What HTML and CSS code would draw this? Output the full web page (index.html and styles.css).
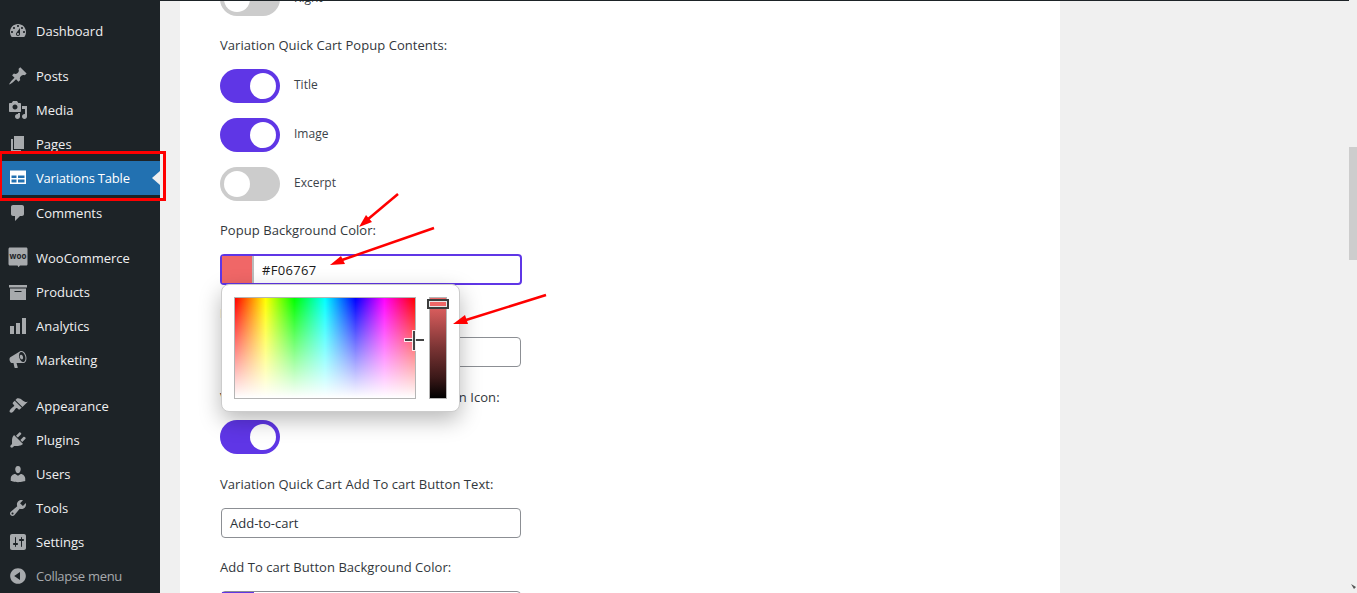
FILE: index.html
```html
<!DOCTYPE html>
<html lang="en">
<head>
<meta charset="utf-8">
<title>Variations Table</title>
<link rel="stylesheet" href="styles.css">
</head>
<body>
<div class="page">
  <nav class="menu">
    <a class="item first"><svg viewBox="0 0 20 20"><path d="M3.76 16h12.48c1.1-1.37 1.76-3.11 1.76-5 0-4.42-3.58-8-8-8s-8 3.58-8 8c0 1.89.66 3.63 1.76 5zM10 4c.55 0 1 .45 1 1s-.45 1-1 1-1-.45-1-1 .45-1 1-1zM6 6c.55 0 1 .45 1 1s-.45 1-1 1-1-.45-1-1 .45-1 1-1zm8 0c.55 0 1 .45 1 1s-.45 1-1 1-1-.45-1-1 .45-1 1-1zm-5.37 5.55L12 7v6c0 1.1-.9 2-2 2s-2-.9-2-2c0-.57.24-1.08.63-1.45zM4 10c.55 0 1 .45 1 1s-.45 1-1 1-1-.45-1-1 .45-1 1-1zm12 0c.55 0 1 .45 1 1s-.45 1-1 1-1-.45-1-1 .45-1 1-1zm-5 3c0-.55-.45-1-1-1s-1 .45-1 1 .45 1 1 1 1-.45 1-1z" fill-rule="evenodd"/></svg><span>Dashboard</span></a>
    <div class="sep"></div>
    <a class="item"><svg viewBox="0 0 20 20"><path d="M10.44 3.02l1.82-1.82 6.36 6.35-1.83 1.82c-1.05-.68-2.48-.57-3.41.36l-.75.75c-.92.93-1.04 2.35-.35 3.41l-1.83 1.82-2.41-2.41-2.8 2.79c-.42.42-3.38 2.71-3.8 2.29s1.86-3.39 2.28-3.81l2.79-2.79L4.1 9.36l1.83-1.82c1.05.69 2.48.57 3.4-.36l.75-.75c.93-.92 1.05-2.35.36-3.41z"/></svg><span>Posts</span></a>
    <a class="item"><svg viewBox="0 0 20 20"><path fill-rule="evenodd" d="M13 11V4c0-.55-.45-1-1-1h-1.67L9 1H5L3.67 3H2c-.55 0-1 .45-1 1v7c0 .55.45 1 1 1h10c.55 0 1-.45 1-1zM7 4.5c1.38 0 2.5 1.12 2.5 2.5S8.38 9.5 7 9.5 4.5 8.38 4.5 7 5.62 4.5 7 4.5zM14 6h5v10.5c0 1.38-1.12 2.5-2.5 2.5S14 17.88 14 16.5s1.12-2.5 2.5-2.5c.17 0 .34.02.5.05V9h-3V6zm-4 8.05V13h2v3.5c0 1.38-1.12 2.5-2.5 2.5S7 17.88 7 16.5 8.12 14 9.5 14c.17 0 .34.02.5.05z"/></svg><span>Media</span></a>
    <a class="item"><svg viewBox="0 0 20 20"><path d="M6 15V2h10v13H6zm-1 1h8v2H3V5h2v11z"/></svg><span>Pages</span></a>
    <a class="item current"><svg viewBox="0 0 20 20"><path fill-rule="evenodd" d="M2 2.500h16V16H2V2.500zm1.500 5v2.500h5V7.500h-5zm6.500 0v2.500h6.500V7.500H10zm-6.500 4v3h5v-3h-5zm6.500 0v3h6.500v-3H10z"/></svg><span>Variations Table</span></a>
    <a class="item comments"><svg viewBox="0 0 20 20"><path d="M5 2h9c1.100 0 2 .9 2 2v7c0 1.100-.9 2-2 2h-2l-5 5v-5H5c-1.100 0-2-.9-2-2V4c0-1.100.9-2 2-2z"/></svg><span>Comments</span></a>
    <div class="sep"></div>
    <a class="item"><svg viewBox="0 0 20 20"><path d="M2 -.5h16c1 0 1.500.6 1.500 1.500v15c0 1-.6 1.500-1.500 1.500h-6l-1.500 1.800-1-1.800H2c-1 0-1.500-.6-1.500-1.500V1c0-.9.6-1.500 1.500-1.500z"/><text class="woo" x="10" y="10.500" text-anchor="middle">woo</text></svg><span>WooCommerce</span></a>
    <a class="item"><svg viewBox="0 0 20 20"><path fill-rule="evenodd" d="M19 3v2.500H1V3h18zM2 6.500h16V18H2V6.500zM13.500 10V9h-7v1h7z"/></svg><span>Products</span></a>
    <a class="item"><svg viewBox="0 0 20 20"><path d="M18 18V2h-4v16h4zm-6 0V7H8v11h4zm-6 0v-8H2v8h4z"/></svg><span>Analytics</span></a>
    <a class="item"><svg viewBox="0 0 20 20"><path fill-rule="evenodd" d="M18.150 5.940c.46 1.620.38 3.220-.02 4.480-.42 1.280-1.260 2.180-2.300 2.480-.16.06-.26.06-.4.06-.06.02-.12.02-.18.02-.06.02-.14.02-.22.02H8.500l1.300 4.500c.02.14-.06.26-.14.34-.08.1-.24.16-.34.16H6.950c-.1 0-.26-.06-.34-.16-.08-.08-.16-.2-.14-.34l-1-4.500H4.250c-.5.060-1.080-.18-1.540-.62s-.88-1.080-1.060-1.880c-.24-.8-.2-1.560-.02-2.200.18-.62.58-1.080 1.060-1.300l9-5.420c.1-.06.18-.1.24-.16.06-.04.14-.08.24-.12.16-.08.28-.12.5-.18 1.040-.3 2.240.1 3.220.98s1.840 2.240 2.260 3.860zm-2.580 5.980c.4-.1.740-.34 1.040-.7.58-.7.860-1.760.860-3.040 0-.64-.1-1.300-.28-1.980-.34-1.360-1.020-2.500-1.780-3.240s-1.680-1.100-2.460-.88c-.82.22-1.400.96-1.700 2-.32 1.040-.28 2.360.06 3.720.38 1.360 1 2.500 1.800 3.240.78.74 1.620 1.100 2.460.88zm-2.540-7.080c.22-.04.42-.02.62.04.38.16.76.48 1.020 1s.42 1.200.42 1.780c0 .3-.04.56-.12.8-.18.48-.44.84-.86.94-.34.1-.8-.06-1.140-.4-.4-.32-.8-.94-1-1.600-.18-.66-.2-1.400-.02-1.840.16-.46.44-.8.86-.9z"/></svg><span>Marketing</span></a>
    <div class="sep wide"></div>
    <a class="item"><svg viewBox="0 0 20 20"><path d="M14.480 11.060L7.410 3.990l1.500-1.500c.5-.56 2.300-.47 3.510.32 1.210.8 1.430 1.280 2.910 2.100 1.180.64 2.450 1.260 4.450.85zm-.71.71L6.700 4.700 4.930 6.470c-.39.39-.39 1.020 0 1.410l1.060 1.060c.39.39.39 1.030 0 1.420-.6.6-1.430 1.110-2.210 1.690-.35.26-.7.53-1.010.84-1.340 1.340-1.550 2.600-.77 3.380.78.78 2.040.57 3.380-.77.31-.31.580-.66.840-1.010.58-.78 1.090-1.610 1.690-2.210.39-.39 1.030-.39 1.420 0l1.060 1.060c.39.39 1.020.39 1.410 0z"/></svg><span>Appearance</span></a>
    <a class="item"><svg viewBox="0 0 20 20"><path d="M13.110 4.360L9.870 7.600 8 5.730l3.240-3.240c.35-.34 1.050-.2 1.560.32.52.51.66 1.210.31 1.550zm-8 1.770l.91-1.120 9.010 9.010-1.190.84c-.71.71-2.630 1.160-3.820 1.160H6.140L4.900 17.260c-.59.59-1.540.59-2.120 0-.59-.58-.59-1.530 0-2.120l1.240-1.240v-3.880c0-1.130.4-3.190 1.090-3.890zm7.260 3.970l3.240-3.240c.34-.35 1.040-.21 1.550.31.52.51.66 1.210.31 1.550l-3.240 3.250z"/></svg><span>Plugins</span></a>
    <a class="item"><svg viewBox="0 0 20 20"><path d="M10 9.250c-2.270 0-2.730-3.440-2.730-3.440C7 4.020 7.820 2 9.970 2c2.160 0 2.980 2.020 2.710 3.810 0 0-.41 3.440-2.680 3.440zm0 2.570L12.720 10c2.390 0 4.520 2.330 4.520 4.530v2.490s-3.650 1.130-7.240 1.130c-3.650 0-7.240-1.130-7.240-1.130v-2.490c0-2.250 1.940-4.480 4.470-4.480z"/></svg><span>Users</span></a>
    <a class="item"><svg viewBox="0 0 20 20"><path fill-rule="evenodd" d="M16.680 9.770c-1.340 1.340-3.300 1.670-4.950.99l-5.410 6.520c-.99.99-2.590.99-3.580 0s-.99-2.590 0-3.570l6.520-5.420c-.68-1.650-.35-3.610.99-4.950 1.280-1.280 3.120-1.620 4.720-1.060l-2.890 2.890 2.820 2.820 2.860-2.870c.53 1.580.18 3.390-1.080 4.650zM3.810 16.210c.4.39 1.040.39 1.430 0 .4-.4.4-1.040 0-1.430-.39-.4-1.030-.4-1.430 0-.39.39-.39 1.030 0 1.430z"/></svg><span>Tools</span></a>
    <a class="item"><svg viewBox="0 0 20 20"><path fill-rule="evenodd" d="M18 16V4c0-1.100-.9-2-2-2H4c-1.100 0-2 .9-2 2v12c0 1.100.9 2 2 2h12c1.100 0 2-.9 2-2zM8 11h1c.55 0 1 .45 1 1s-.45 1-1 1H8v1.500c0 .28-.22.5-.5.5s-.5-.22-.5-.5V13H6c-.55 0-1-.45-1-1s.45-1 1-1h1V5.500c0-.28.22-.5.5-.5s.5.22.5.5V11zm5-2h-1c-.55 0-1-.45-1-1s.45-1 1-1h1V5.500c0-.28.22-.5.5-.5s.5.22.5.5V7h1c.55 0 1 .45 1 1s-.45 1-1 1h-1v5.500c0 .28-.22.5-.5.5s-.5-.22-.5-.5V9z"/></svg><span>Settings</span></a>
    <a class="item collapse"><svg viewBox="0 0 20 20"><path fill-rule="evenodd" d="M10 2.160c4.330 0 7.840 3.510 7.840 7.840s-3.510 7.840-7.840 7.840S2.160 14.330 2.160 10 5.710 2.160 10 2.160zm2 11.720V6.120L6.180 9.970z"/></svg><span>Collapse menu</span></a>
  </nav>
  <main class="main">
    <section class="card">
      <div class="toggle-row cut">
        <span class="toggle off"></span><span class="opt">Right</span>
      </div>
      <p class="label first-label">Variation Quick Cart Popup Contents:</p>
      <div class="toggle-row"><span class="toggle on"></span><span class="opt">Title</span></div>
      <div class="toggle-row"><span class="toggle on"></span><span class="opt">Image</span></div>
      <div class="toggle-row"><span class="toggle off"></span><span class="opt">Excerpt</span></div>
      <p class="label l-popup">Popup Background Color:</p>
      <div class="field active">
        <span class="swatch"></span><span class="value">#F06767</span>
        <div class="picker">
          <div class="spectrum"><span class="cross"></span></div>
          <div class="hue"><span class="hue-thumb"></span></div>
        </div>
      </div>
      <p class="label l-hidden">Popup Text Color:</p>
      <div class="field plain"><span class="value">#000000</span></div>
      <p class="label l-icon">Variation Quick Cart Popup Close Button Icon:</p>
      <div class="toggle-row solo"><span class="toggle on"></span></div>
      <p class="label l-text">Variation Quick Cart Add To cart Button Text:</p>
      <div class="field plain"><span class="value">Add-to-cart</span></div>
      <p class="label l-bg">Add To cart Button Background Color:</p>
      <div class="field plain"><span class="swatch purple"></span></div>
    </section>
  </main>
  <div class="scrollbar"><span class="thumb"></span><span class="down"></span></div>
</div>
<div class="topline"></div>
<div class="highlight"></div>
<svg class="arrows" viewBox="0 0 1357 593">
  <path d="M398 194L367 220"/><path class="head" d="M359 227L372 222 366 215z"/>
  <path d="M434 228L342 260"/><path class="head" d="M330 265L345 264 341 256z"/>
  <path d="M546 295L466 320"/><path class="head" d="M453 324L468 324 465 315z"/>
</svg>
</body>
</html>
```

FILE: styles.css
```css
* { box-sizing: border-box; }
html, body { margin: 0; height: 100%; overflow: hidden; }
body { font-family: "Open Sans", "Noto Sans", sans-serif; background: #f0f0f0; }
.page { display: flex; height: 593px; overflow: hidden; }

.menu { width: 160px; flex: none; background: #1d2327; padding-top: 14px; height: 593px; position: relative; z-index: 1; }
.item { display: flex; align-items: center; height: 34px; color: #f0f0f1; font-size: 13px; padding-left: 8px; position: relative; }
.item svg { width: 20px; height: 20px; fill: #a7aaad; flex: none; margin-right: 8px; overflow: visible; }
.item span { display: block; }
.sep { height: 11px; }
.sep.wide { height: 12px; }
.comments { margin-top: 1px; }
.current { background: #2271b1; color: #fff; }
.current span { letter-spacing: -.2px; }
.current svg { fill: #fff; }
.current::after { content: ""; position: absolute; right: 0; top: 10px; border: 7px solid transparent; border-right-color: #f0f0f0; border-left-width: 0; border-right-width: 8px; }
.collapse { color: #a7aaad; }
.collapse span { letter-spacing: -.3px; }
.woo { font: 700 8px "Open Sans", sans-serif; fill: #1d2327; }

.main { flex: 1; min-width: 0; padding-left: 20px; }
.card { width: 880px; background: #fff; padding: 0 40px; height: 700px; margin-top: -18px; }

.label { margin: 0; font-size: 13px; line-height: 18px; color: #32373c; font-weight: 500; letter-spacing: .05px; }
.first-label { margin-top: 20px; margin-bottom: 15px; }
.toggle-row { display: flex; align-items: center; height: 34px; margin-bottom: 15px; }
.toggle-row.cut { margin-bottom: 0; }
.toggle-row.solo { margin-bottom: 21px; }
.toggle { position: relative; width: 60px; height: 34px; border-radius: 17px; background: #ccc; flex: none; }
.toggle::after { content: ""; position: absolute; top: 4px; left: 4px; width: 26px; height: 26px; border-radius: 50%; background: #fff; }
.toggle.on { background: #5f36e6; }
.toggle.on::after { left: 30px; }
.opt { margin-left: 14px; font-size: 12px; color: #3c434a; position: relative; top: -2px; }

.l-popup { margin-top: 20px; margin-bottom: 15px; }
.l-hidden { margin-top: 19px; margin-bottom: 15px; }
.l-icon { margin-top: 21px; margin-bottom: 14px; }
.l-text { margin-bottom: 15px; }
.l-bg { margin-top: 20px; margin-bottom: 15px; }

.field { position: relative; display: flex; align-items: center; width: 300px; height: 30px; border: 1px solid #8c8f94; border-radius: 4px; margin-left: 1px; background: #fff; color: #2c3338; font-size: 13px; }
.field .value { padding-left: 8px; }
.field.active { width: 302px; height: 31px; margin-left: 0; border: 2px solid #5f36e6; color: #1a1a1a; }
.field.active .value { letter-spacing: .3px; }
.swatch { width: 32px; height: 100%; background: #f06767; border-right: 2px solid #bbb; flex: none; }
.swatch.purple { background: #5f36e6; border: 0; }

.picker { position: absolute; left: -1px; top: 28px; width: 239px; height: 128px; background: #fff; border: 1px solid #ccc; border-radius: 8px; box-shadow: 0 8px 22px rgba(0,0,0,.28); z-index: 2; display: flex; padding: 12px; gap: 13px; }
.spectrum { position: relative; width: 183px; height: 102px; border: 1px solid #b5b5b5; background: linear-gradient(to bottom, rgba(255,255,255,0) 0%, #fff 100%), linear-gradient(to right, #f00 0%, #ff0 17%, #0f0 33%, #0ff 50%, #00f 67%, #f0f 83%, #f00 100%); }
.cross { position: absolute; left: 170px; top: 33px; width: 19px; height: 19px; z-index: 3; }
.cross::before, .cross::after { content: ""; position: absolute; background: #444; outline: 1px solid rgba(255,255,255,.85); }
.cross::before { left: 0; top: 8px; width: 19px; height: 2px; }
.cross::after { left: 8px; top: 0; width: 2px; height: 19px; }
.hue { position: relative; width: 18px; height: 102px; border: 1px solid #b5b5b5; background: linear-gradient(to bottom, #f06767 0%, #c25353 20%, #7a3434 50%, #3a1818 80%, #000 100%); }
.hue-thumb { position: absolute; left: -3px; top: 1px; width: 22px; height: 10px; border: 2px solid #3c3c3c; background: #f06767; box-shadow: inset 0 0 0 1px #e8e8e8; }

.scrollbar { position: absolute; top: 0; right: 0; width: 8px; height: 593px; background: #f0f0f0; }
.thumb { position: absolute; left: 0; top: 147px; width: 8px; height: 113px; background: #cdcdcd; }
.down { position: absolute; right: 1px; bottom: 4px; width: 5px; height: 5px; background: #555; clip-path: polygon(0 0, 100% 60%, 60% 100%); }

.topline { position: absolute; top: 0; left: 0; width: 1349px; height: 1px; background: #1d2327; z-index: 3; }
.highlight { position: absolute; left: 0; top: 151px; width: 166px; height: 50px; border: 3px solid #f00; border-left-width: 2px; z-index: 4; }
.arrows { position: absolute; left: 0; top: 0; width: 1357px; height: 593px; z-index: 5; pointer-events: none; }
.arrows path { stroke: #f00; stroke-width: 2.500; fill: none; }
.arrows .head { fill: #f00; stroke: none; }
```
